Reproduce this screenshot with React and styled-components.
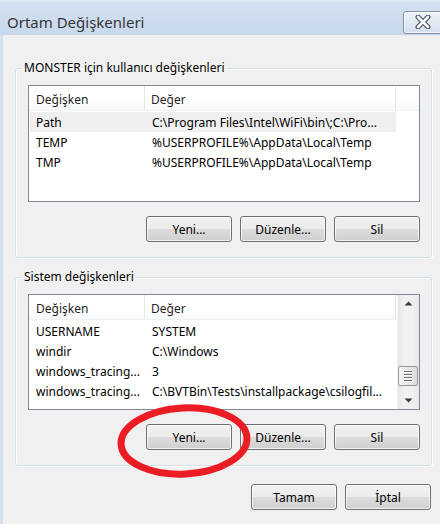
import React from 'react';
import styled, { createGlobalStyle } from 'styled-components';

const GlobalStyle = createGlobalStyle`
	html, body {
		margin: 0;
		padding: 0;
		background: #fff;
	}
`;

const userVars = [
	{ name: 'Path', value: 'C:\\Program Files\\Intel\\WiFi\\bin\\;C:\\Pro...', selected: true },
	{ name: 'TEMP', value: '%USERPROFILE%\\AppData\\Local\\Temp' },
	{ name: 'TMP', value: '%USERPROFILE%\\AppData\\Local\\Temp' },
];

const systemVars = [
	{ name: 'USERNAME', value: 'SYSTEM' },
	{ name: 'windir', value: 'C:\\Windows' },
	{ name: 'windows_tracing...', value: '3' },
	{ name: 'windows_tracing...', value: 'C:\\BVTBin\\Tests\\installpackage\\csilogfil...' },
];

const VarList = ({ rows, height, scroll }) => (
	<ListView $h={height}>
		<Columns>
			<Header>
				<HeaderCell $w={116} $pad={7}>Değişken</HeaderCell>
				<HeaderCell $w={251} $pad={6}>Değer</HeaderCell>
				<HeaderFiller />
			</Header>
			<Rows>
				{rows.map((r, i) => (
					<Row key={i} $sel={r.selected}>
						<Cell $w={115} $pad={6}>{r.name}</Cell>
						<Cell $w={251} $pad={7}>{r.value}</Cell>
					</Row>
				))}
			</Rows>
		</Columns>
		{scroll && (
			<Scrollbar>
				<ArrowButton>
					<svg width="9" height="5" viewBox="0 0 9 5">
						<path d="M0.5 4.5 L4.5 0.5 L8.5 4.5 Z" fill="#3c3c3c" />
					</svg>
				</ArrowButton>
				<Track>
					<Thumb>
						<Grip />
						<Grip />
						<Grip />
						<Grip />
					</Thumb>
				</Track>
				<ArrowButton>
					<svg width="9" height="5" viewBox="0 0 9 5">
						<path d="M0.5 0.5 L4.5 4.5 L8.5 0.5 Z" fill="#3c3c3c" />
					</svg>
				</ArrowButton>
			</Scrollbar>
		)}
	</ListView>
);

const App = () => {
	return (
		<>
			<GlobalStyle />
			<Window>
				<TitleBar>
					<Title>Ortam Değişkenleri</Title>
					<CloseButton>
						<svg width="18" height="14" viewBox="0 0 18 14">
							<path d="M4 2 L14 12 M14 2 L4 12" stroke="#4d5869" strokeWidth="5" strokeLinecap="round" />
							<path d="M4 2 L14 12 M14 2 L4 12" stroke="#fff" strokeWidth="2.6" strokeLinecap="round" />
						</svg>
					</CloseButton>
				</TitleBar>

				<Body>
					<Group>
						<Legend>MONSTER için kullanıcı değişkenleri</Legend>
						<GroupBody>
							<VarList rows={userVars} height={117} />
							<ButtonRow>
								<Button>Yeni...</Button>
								<Button>Düzenle...</Button>
								<Button>Sil</Button>
							</ButtonRow>
						</GroupBody>
					</Group>

					<Group>
						<Legend>Sistem değişkenleri</Legend>
						<GroupBody>
							<VarList rows={systemVars} height={116} scroll />
							<ButtonRow>
								<Button>Yeni...</Button>
								<Button>Düzenle...</Button>
								<Button>Sil</Button>
							</ButtonRow>
						</GroupBody>
					</Group>

					<Footer>
						<Button>Tamam</Button>
						<Button>İptal</Button>
					</Footer>
				</Body>

				<Marker viewBox="0 0 140 84">
					<ellipse cx="70" cy="42" rx="63" ry="33" fill="none" stroke="#ec1c24" strokeWidth="7" transform="rotate(-3 70 42)" />
				</Marker>
			</Window>
		</>
	);
};

export default App;

// styled components
const Window = styled.div`
	position: relative;
	width: 440px;
	height: 524px;
	overflow: hidden;
	display: flex;
	flex-direction: column;
	background: #d4e1f1;
	font-family: 'Segoe UI', 'Noto Sans', sans-serif;
	font-size: 12px;
	color: #000;
`;

const TitleBar = styled.div`
	box-sizing: border-box;
	height: 35px;
	padding: 9px 0 0 7px;
	display: flex;
	align-items: center;
	background: linear-gradient(#e3ecf7 0, #d2e0f0 3px, #c8d8ec 100%);
`;

const Title = styled.div`
	flex: 1;
	font-size: 15px;
	color: #353535;
`;

const CloseButton = styled.div`
	box-sizing: border-box;
	width: 44px;
	height: 23px;
	margin-right: -7px;
	display: flex;
	align-items: center;
	justify-content: flex-start;
	padding-left: 10px;
	border: 1px solid #8592a4;
	border-radius: 3px;
	background: linear-gradient(#eef3f9, #d6e1ee);
	box-shadow: inset 0 0 0 1px rgba(255, 255, 255, 0.6);
`;

const Body = styled.div`
	flex: 1;
	margin-left: 3px;
	padding: 25px 8px 0 12px;
	background: #f0f0f0;
	display: flex;
	flex-direction: column;
`;

const Group = styled.fieldset`
	margin: 0;
	padding: 0;
	min-inline-size: 0;
	width: 417px;
	box-sizing: border-box;
	border: 1px solid #d5dfe5;
	border-radius: 3px;
	box-shadow: inset 1px 1px 0 #fff, 1px 1px 0 #fff;

	& + & {
		margin-top: 11px;
	}
`;

const Legend = styled.legend`
	margin-left: 6px;
	padding: 0 2px;
	line-height: 16px;
`;

const GroupBody = styled.div`
	padding: 9px 11px 15px 12px;
`;

const ListView = styled.div`
	box-sizing: border-box;
	height: ${p => p.$h}px;
	display: flex;
	border: 1px solid #828790;
	background: #fff;
	overflow: hidden;
`;

const Columns = styled.div`
	flex: 1;
	min-width: 0;
	display: flex;
	flex-direction: column;
`;

const Header = styled.div`
	display: flex;
	height: 24px;
	flex-shrink: 0;
	background: linear-gradient(#fff, #fff 60%, #f7f8fa);
	border-bottom: 1px solid #f0f1f3;
	color: #1e1e1e;
`;

const HeaderCell = styled.div`
	box-sizing: border-box;
	width: ${p => p.$w}px;
	padding: 2px 0 0 ${p => p.$pad}px;
	border-right: 1px solid #e3e6ea;
	display: flex;
	align-items: center;
	white-space: nowrap;
`;

const HeaderFiller = styled.div`
	flex: 1;
`;

const Rows = styled.div`
	padding-top: 1px;
`;

const Row = styled.div`
	display: flex;
	align-items: center;
	height: 20px;
	width: 366px;
	margin-left: 1px;
	background: ${p => (p.$sel ? '#efefef' : 'transparent')};
`;

const Cell = styled.div`
	box-sizing: border-box;
	width: ${p => p.$w}px;
	padding-left: ${p => p.$pad}px;
	white-space: nowrap;
	overflow: hidden;
`;

const Scrollbar = styled.div`
	width: 21px;
	flex-shrink: 0;
	display: flex;
	flex-direction: column;
	background: linear-gradient(90deg, #e6e6e6, #f2f2f2 30%, #f0f0f0 70%, #e8e8e8);
	border-left: 1px solid #f5f5f5;
`;

const ArrowButton = styled.div`
	height: 17px;
	display: flex;
	align-items: center;
	justify-content: center;
`;

const Track = styled.div`
	flex: 1;
`;

const Thumb = styled.div`
	box-sizing: border-box;
	margin: 54px 1px 0 0;
	height: 20px;
	border: 1px solid #979797;
	border-radius: 2px;
	background: linear-gradient(90deg, #f4f4f4, #e8e8e8 50%, #dcdcdc);
	display: flex;
	flex-direction: column;
	align-items: center;
	justify-content: center;
	gap: 2px;
`;

const Grip = styled.div`
	width: 8px;
	height: 1px;
	background: #6f6f6f;
	box-shadow: 0 1px 0 #fff;
`;

const ButtonRow = styled.div`
	display: flex;
	justify-content: flex-end;
	gap: 8px;
	margin-top: 14px;
`;

const Footer = styled.div`
	display: flex;
	justify-content: flex-end;
	gap: 8px;
	margin-top: 18px;
	padding-right: 1px;
`;

const Button = styled.button`
	all: unset;
	box-sizing: border-box;
	width: 86px;
	height: 26px;
	display: flex;
	align-items: center;
	justify-content: center;
	border: 1px solid #707070;
	border-radius: 3px;
	background: linear-gradient(#f2f2f2 0, #ebebeb 50%, #dddddd 50%, #cfcfcf 100%);
	box-shadow: inset 0 0 0 1px rgba(255, 255, 255, 0.7);
	font-family: inherit;
	font-size: 12px;
	color: #000;
`;

const Marker = styled.svg`
	position: absolute;
	left: 114px;
	top: 399px;
	width: 140px;
	height: 84px;
	pointer-events: none;
`;
